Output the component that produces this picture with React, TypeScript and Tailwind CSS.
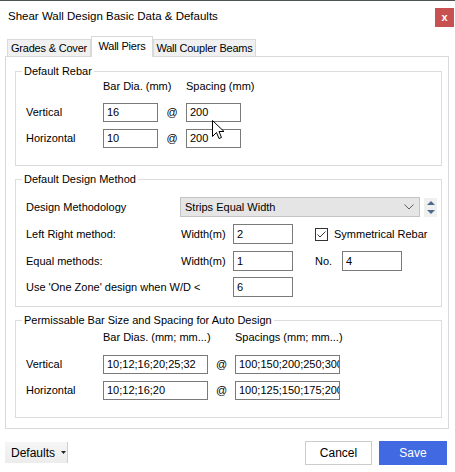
import React from "react";

function Field({ className, value }: { className: string; value: string }) {
  return (
    <div
      className={
        "border border-[#7a7a7a] bg-white pl-[3px] flex items-center overflow-hidden whitespace-nowrap leading-none " +
        className
      }
    >
      {value}
    </div>
  );
}

function Group({
  title,
  className,
  children,
}: {
  title: string;
  className: string;
  children: React.ReactNode;
}) {
  return (
    <fieldset className={"w-[427px] border border-[#dcdcdc] " + className}>
      <legend className="ml-[6px] px-[2px] leading-[13px]">{title}</legend>
      {children}
    </fieldset>
  );
}

function At({ className }: { className: string }) {
  return <div className={"flex items-center justify-center " + className}>@</div>;
}

export default function App() {
  return (
    <div className="relative w-[455px] h-[472px] overflow-hidden bg-white flex flex-col font-['Liberation_Sans',Arial,sans-serif] text-[11px] text-black">
      <div className="h-px bg-[#4d5550]" />
      {/* Title bar */}
      <div className="h-[34px] flex items-start justify-between">
        <div className="mt-[8px] ml-[8px] text-[11.5px] leading-[14px]">
          Shear Wall Design Basic Data &amp; Defaults
        </div>
        <div className="mt-[7px] mr-px w-[19px] h-[19px] bg-[#c75050] text-white font-bold text-[11px] leading-none flex items-center justify-center pb-px">
          x
        </div>
      </div>
      {/* Tabs */}
      <div className="h-[21px] flex items-end pl-[7px]">
        <div className="w-[84px] h-[17px] bg-[#f0f0f0] border border-b-0 border-[#d9d9d9] flex items-center justify-center tracking-[-0.2px] leading-none">
          Grades &amp; Cover
        </div>
        <div className="relative z-10 w-[62px] h-[21px] -mb-px bg-white border border-b-0 border-[#d9d9d9] flex items-start justify-center pt-[4px] tracking-[-0.2px] leading-none">
          Wall Piers
        </div>
        <div className="w-[103px] h-[17px] bg-[#f0f0f0] border border-b-0 border-[#d9d9d9] flex items-center justify-center tracking-[-0.2px] leading-none">
          Wall Coupler Beams
        </div>
      </div>
      {/* Panel */}
      <div className="ml-[5px] w-[444px] border border-[#d9d9d9] pt-[8px] pb-[10px] pl-[9px] flex flex-col">
        <Group title="Default Rebar" className="">
          <div className="pl-[10px] pb-[17px] flex flex-col">
            <div className="h-[16px] flex items-center">
              <div className="w-[77px]" />
              <div className="w-[83px]">Bar Dia. (mm)</div>
              <div>Spacing (mm)</div>
            </div>
            <div className="mt-[9px] h-[19px] flex">
              <div className="w-[77px] flex items-center">Vertical</div>
              <Field className="w-[55px] h-[19px]" value="16" />
              <At className="w-[28px]" />
              <Field className="w-[55px] h-[19px]" value="200" />
            </div>
            <div className="mt-[7px] h-[19px] flex">
              <div className="w-[77px] flex items-center">Horizontal</div>
              <Field className="w-[55px] h-[19px]" value="10" />
              <At className="w-[28px]" />
              <Field className="w-[55px] h-[19px]" value="200" />
            </div>
          </div>
        </Group>

        <Group title="Default Design Method" className="mt-[7px]">
          <div className="pl-[10px] pb-[9px] flex flex-col">
            <div className="mt-[11px] h-[20px] flex items-center">
              <div className="w-[154px]">Design Methodology</div>
              <div className="w-[240px] h-[20px] bg-[#e5e5e5] border border-[#c4c4c4] flex items-center justify-between pl-[4px] pr-[5px]">
                <span>Strips Equal Width</span>
                <svg width="10" height="6" viewBox="0 0 10 6">
                  <path d="M0.5 0.5 L5 5 L9.5 0.5" fill="none" stroke="#606060" strokeWidth="1" />
                </svg>
              </div>
              <div className="ml-[4px] w-[13px] h-[19px] bg-[#f0f0f0] flex flex-col items-center justify-center gap-[5px]">
                <svg width="8" height="4" viewBox="0 0 8 4">
                  <path d="M0 4 L4 0 L8 4 Z" fill="#4d6b8c" />
                </svg>
                <svg width="8" height="4" viewBox="0 0 8 4">
                  <path d="M0 0 L4 4 L8 0 Z" fill="#4d6b8c" />
                </svg>
              </div>
            </div>
            <div className="mt-[7px] h-[20px] flex items-center">
              <div className="w-[155px]">Left Right method:</div>
              <div className="w-[52px]">Width(m)</div>
              <Field className="w-[60px] h-[20px]" value="2" />
              <svg className="ml-[22px]" width="13" height="13" viewBox="0 0 13 13">
                <rect x="0.5" y="0.5" width="12" height="12" fill="#fff" stroke="#333" />
                <path d="M2.5 6.5 L5 9 L10.5 3.5" fill="none" stroke="#333" strokeWidth="1" />
              </svg>
              <div className="ml-[6px]">Symmetrical Rebar</div>
            </div>
            <div className="mt-[7px] h-[20px] flex items-center">
              <div className="w-[155px]">Equal methods:</div>
              <div className="w-[52px]">Width(m)</div>
              <Field className="w-[60px] h-[20px]" value="1" />
              <div className="ml-[22px] w-[27px]">No.</div>
              <Field className="w-[60px] h-[20px]" value="4" />
            </div>
            <div className="mt-[6px] h-[20px] flex items-center">
              <div className="w-[207px]">Use &apos;One Zone&apos; design when W/D &lt;</div>
              <Field className="w-[60px] h-[20px]" value="6" />
            </div>
          </div>
        </Group>

        <Group title="Permissable Bar Size and Spacing for Auto Design" className="mt-[7px]">
          <div className="pl-[10px] pb-[17px] flex flex-col">
            <div className="mt-[2px] h-[16px] flex items-center">
              <div className="w-[77px]" />
              <div className="w-[132px]">Bar Dias. (mm; mm...)</div>
              <div>Spacings (mm; mm...)</div>
            </div>
            <div className="mt-[10px] h-[19px] flex">
              <div className="w-[77px] flex items-center">Vertical</div>
              <Field className="w-[105px] h-[19px]" value="10;12;16;20;25;32" />
              <At className="w-[27px]" />
              <Field className="w-[105px] h-[19px]" value="100;150;200;250;300" />
            </div>
            <div className="mt-[7px] h-[19px] flex">
              <div className="w-[77px] flex items-center">Horizontal</div>
              <Field className="w-[105px] h-[19px]" value="10;12;16;20" />
              <At className="w-[27px]" />
              <Field className="w-[105px] h-[19px]" value="100;125;150;175;200" />
            </div>
          </div>
        </Group>
      </div>
      {/* Buttons */}
      <div className="mt-[12px] flex items-start text-[12px]">
        <div className="ml-[5px] mt-px w-[63px] h-[21px] bg-gradient-to-b from-[#f6f6f6] to-[#ececec] border-r border-[#cfcfcf] flex items-center pl-[6px] gap-[6px]">
          <span>Defaults</span>
          <svg width="5" height="3" viewBox="0 0 5 3">
            <path d="M0 0 L5 0 L2.5 3 Z" fill="#222" />
          </svg>
        </div>
        <div className="ml-auto w-[67px] h-[24px] bg-white border border-[#cccccc] flex items-center justify-center">
          Cancel
        </div>
        <div className="ml-[7px] mr-[8px] w-[68px] h-[24px] bg-[#4169e1] text-white flex items-center justify-center">
          Save
        </div>
      </div>
      {/* Mouse cursor overlay */}
      <svg className="absolute left-[212px] top-[120px]" width="13" height="20" viewBox="0 0 13 20">
        <path
          d="M0.5 0.5 L0.5 16.5 L4.5 12.5 L7 18.5 L9.5 17.5 L7 11.5 L12 11.5 Z"
          fill="#fff"
          stroke="#000"
          strokeWidth="1"
          strokeLinejoin="round"
        />
      </svg>
    </div>
  );
}
